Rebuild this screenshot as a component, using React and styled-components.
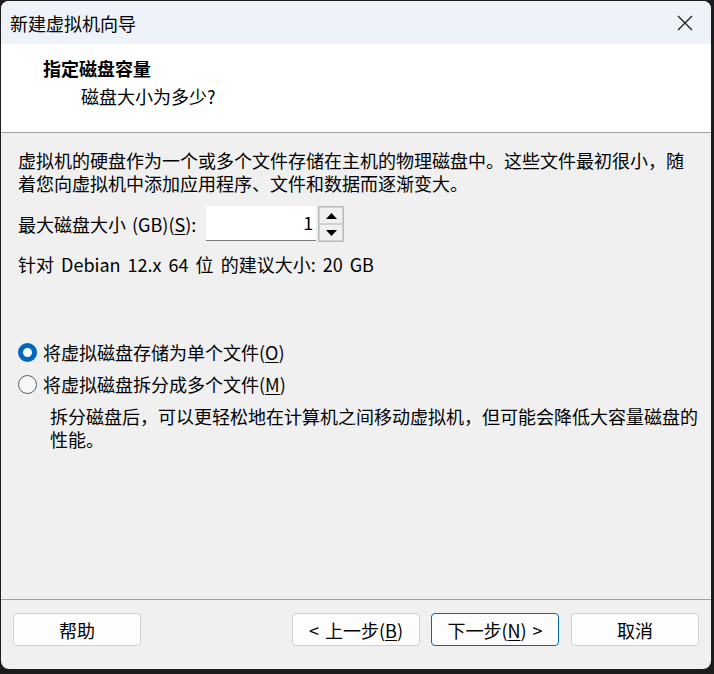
import styled, { createGlobalStyle } from "styled-components";

const GlobalStyle = createGlobalStyle`
  html, body {
    margin: 0;
    padding: 0;
    background: #1c1c1c;
  }
  body {
    font-family: "Noto Sans CJK SC", "Noto Sans", sans-serif;
    color: #000;
  }
`;

const Screen = styled.div`
  width: 714px;
  height: 674px;
  padding: 1px 0 0 1px;
  box-sizing: border-box;
  background: #1c1c1c;
`;

const Window = styled.div`
  width: 710px;
  height: 668px;
  display: flex;
  flex-direction: column;
  background: #f0f0f0;
  border-radius: 8px;
  overflow: hidden;
`;

const TitleBar = styled.div`
  height: 43px;
  display: flex;
  align-items: center;
  justify-content: space-between;
  padding: 0 0 0 9px;
  background: #eef2f9;
  font-size: 18px;
`;

const CloseBtn = styled.div`
  width: 46px;
  height: 43px;
  display: flex;
  align-items: center;
  justify-content: center;
  margin-right: 3px;
`;

const Header = styled.div`
  height: 89px;
  background: #fff;
  border-bottom: 1px solid #a0a0a0;
  padding: 12px 0 0 42px;
  box-sizing: border-box;
`;

const HeaderTitle = styled.div`
  font-size: 18px;
  font-weight: bold;
  line-height: 24px;
`;

const HeaderSub = styled.div`
  font-size: 18px;
  line-height: 24px;
  margin: 4px 0 0 38px;
`;

const Body = styled.div`
  flex: 1;
  padding: 16px 0 0 17px;
  font-size: 18px;
  line-height: 23px;
`;

const Para = styled.p`
  margin: ${(p) => p.$m || "0"};
  padding-left: ${(p) => p.$indent || 0}px;
  width: ${(p) => p.$w || 680}px;
  word-spacing: ${(p) => p.$ws || 0}px;
`;

const SizeRow = styled.div`
  display: flex;
  align-items: center;
  margin-top: 11px;
  height: 36px;
  word-spacing: 2px;
`;

const SpinBox = styled.div`
  display: flex;
  margin-left: 10px;
  height: 36px;
`;

const NumInput = styled.div`
  width: 110px;
  height: 35px;
  background: #fff;
  border-bottom: 1px solid #7a7a7a;
  text-align: right;
  padding-right: 3px;
  box-sizing: border-box;
  line-height: 33px;
`;

const Spinner = styled.div`
  width: 26px;
  height: 36px;
  margin-left: 2px;
  border: 1px solid #bcbcbc;
  box-sizing: border-box;
  display: flex;
  flex-direction: column;
`;

const SpinBtn = styled.div`
  flex: 1;
  display: flex;
  align-items: center;
  justify-content: center;
  background: #f0f0f0;
  border: 1px solid #d0d0d0;
`;

const Radios = styled.div`
  margin-top: 65px;
  display: flex;
  flex-direction: column;
  gap: 9px;
`;

const RadioRow = styled.label`
  display: flex;
  align-items: center;
  height: 23px;
`;

const RadioDot = styled.span`
  width: 19px;
  height: 19px;
  border-radius: 50%;
  box-sizing: border-box;
  margin-right: 6px;
  flex: none;
  background: ${(p) => (p.$on ? "#fff" : "#f7f7f7")};
  border: ${(p) => (p.$on ? "5.5px solid #0067c0" : "1px solid #5c5c5c")};
`;

const U = styled.span`
  text-decoration: underline;
  text-underline-offset: 2px;
`;

const Footer = styled.div`
  height: 56px;
  border-top: 1px solid #a0a0a0;
  display: flex;
  align-items: flex-start;
  padding: 13px 12px 0 12px;
`;

const Button = styled.button`
  width: 128px;
  height: 33px;
  box-sizing: border-box;
  background: #fdfdfd;
  border: 1px solid ${(p) => (p.$focus ? "#0067c0" : "#d0d0d0")};
  border-radius: 4px;
  font-family: "Noto Sans CJK SC", "Noto Sans", sans-serif;
  font-size: 18px;
  color: #000;
  padding: 0;
  word-spacing: 2px;
  margin-left: ${(p) => p.$ml || 0}px;
`;

const Spacer = styled.div`
  flex: 1;
`;

const Tri = ({ up }) => (
  <svg width="11" height="6" viewBox="0 0 11 6">
    <path d={up ? "M0 6 L5.5 0 L11 6 Z" : "M0 0 L5.5 6 L11 0 Z"} fill="#000" />
  </svg>
);

export default function App() {
  return (
    <>
      <GlobalStyle />
      <Screen>
        <Window>
          <TitleBar>
            <span>新建虚拟机向导</span>
            <CloseBtn>
              <svg width="16" height="16" viewBox="0 0 16 16">
                <path d="M1 1 L15 15 M15 1 L1 15" stroke="#1a1a1a" strokeWidth="1.3" />
              </svg>
            </CloseBtn>
          </TitleBar>
          <Header>
            <HeaderTitle>指定磁盘容量</HeaderTitle>
            <HeaderSub>磁盘大小为多少?</HeaderSub>
          </Header>
          <Body>
            <Para>
              虚拟机的硬盘作为一个或多个文件存储在主机的物理磁盘中。这些文件最初很小，随着您向虚拟机中添加应用程序、文件和数据而逐渐变大。
            </Para>
            <SizeRow>
              <span>
                最大磁盘大小 (GB)(<U>S</U>):
              </span>
              <SpinBox>
                <NumInput>1</NumInput>
                <Spinner>
                  <SpinBtn>
                    <Tri up />
                  </SpinBtn>
                  <SpinBtn>
                    <Tri />
                  </SpinBtn>
                </Spinner>
              </SpinBox>
            </SizeRow>
            <Para $m="11px 0 0 0" $ws={3}>
              针对 Debian 12.x 64 位 的建议大小: 20 GB
            </Para>
            <Radios>
              <RadioRow>
                <RadioDot $on />
                将虚拟磁盘存储为单个文件(<U>O</U>)
              </RadioRow>
              <RadioRow>
                <RadioDot />
                将虚拟磁盘拆分成多个文件(<U>M</U>)
              </RadioRow>
            </Radios>
            <Para $m="9px 0 0 0" $indent={32} $w={650}>
              拆分磁盘后，可以更轻松地在计算机之间移动虚拟机，但可能会降低大容量磁盘的性能。
            </Para>
          </Body>
          <Footer>
            <Button>帮助</Button>
            <Spacer />
            <Button>
              &lt; 上一步(<U>B</U>)
            </Button>
            <Button $focus $ml={11}>
              下一步(<U>N</U>) &gt;
            </Button>
            <Button $ml={12}>取消</Button>
          </Footer>
        </Window>
      </Screen>
    </>
  );
}
